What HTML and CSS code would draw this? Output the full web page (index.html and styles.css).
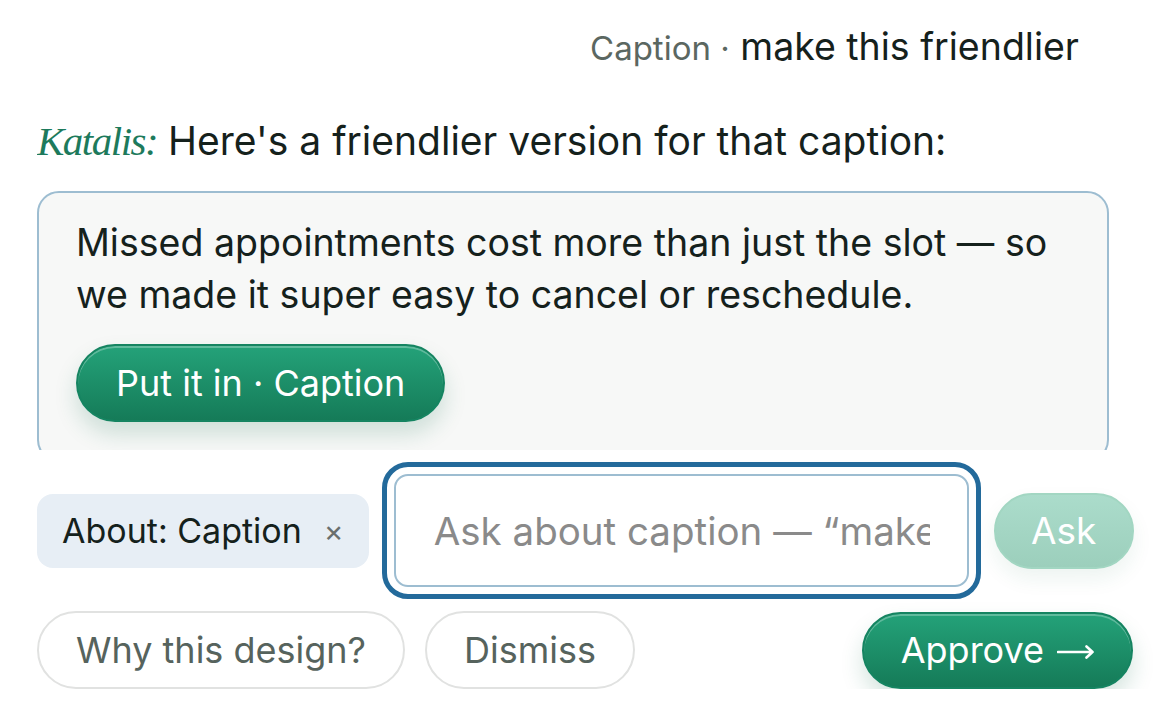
FILE: index.html
```html
<!DOCTYPE html>
<html lang="en">
<head>
<meta charset="utf-8">
<title>Katalis</title>
<link rel="stylesheet" href="styles.css">
</head>
<body>
<div class="app">
  <div class="thread">
    <div class="user-msg"><span class="user-scope">Caption ·</span> make this friendlier</div>
    <div class="reply"><span class="bot-name">Katalis:</span> Here's a friendlier version for that caption:</div>
    <div class="card">
      <p class="card-text">Missed appointments cost more than just the slot — so we made it super easy to cancel or reschedule.</p>
      <button class="btn btn-green btn-put">Put it in · Caption</button>
    </div>
  </div>
  <div class="ask-row">
    <div class="chip"><span>About: Caption</span><span class="chip-x">×</span></div>
    <input class="ask-input" type="text" placeholder="Ask about caption — “make it shorter”">
    <button class="btn btn-ask">Ask</button>
  </div>
  <div class="actions">
    <button class="btn btn-ghost btn-why">Why this design?</button>
    <button class="btn btn-ghost btn-dismiss">Dismiss</button>
    <button class="btn btn-green btn-approve"><span>Approve</span><svg class="arrow" width="37" height="16" viewBox="0 0 37 16" aria-hidden="true"><path d="M1 8H35.5M29.5 2.5L35.5 8L29.5 13.5" fill="none" stroke="#ffffff" stroke-width="2.6" stroke-linecap="round" stroke-linejoin="round"/></svg></button>
  </div>
</div>
</body>
</html>
```
FILE: styles.css
```css
* { box-sizing: border-box; }
html, body { margin: 0; padding: 0; background: #ffffff; }
body { font-family: Inter, "Noto Sans", sans-serif; color: #15211c; }

.app { padding: 0 37px; width: 1170px; }

.thread {
  height: 450px;
  overflow: hidden;
  padding-right: 24px;
  padding-top: 24px;
}

.user-msg {
  text-align: right;
  padding-right: 30px;
  font-size: 37.5px;
  line-height: 46px;
  color: #15211c;
}
.user-scope { color: #5b6761; font-size: 33px; }

.reply {
  margin-top: 47px;
  font-size: 39px;
  line-height: 46px;
  white-space: nowrap;
}
.bot-name {
  font-family: "Liberation Serif", serif;
  font-style: italic;
  color: #1d7a5c;
  font-size: 41px;
  letter-spacing: -1.5px;
}

.card {
  margin-top: 27px;
  border: 2px solid #9dbdd1;
  border-radius: 22px;
  background: #f7f8f7;
  padding: 24px 37px 38px;
}
.card-text {
  margin: 0;
  font-size: 37.5px;
  line-height: 52px;
}

.btn {
  font-family: Inter, "Noto Sans", sans-serif;
  font-size: 36px;
  border-radius: 40px;
  cursor: pointer;
  white-space: nowrap;
  flex-shrink: 0;
}
.btn-green {
  color: #ffffff;
  border: 2px solid #158461;
  background: linear-gradient(#24a279, #157b58);
  box-shadow: inset 0 2px 0 rgba(255,255,255,0.28), 0 12px 22px rgba(20,110,80,0.18);
}
.btn-put {
  margin-top: 23px;
  height: 78px;
  padding: 0 38px;
}

.ask-row {
  display: flex;
  align-items: center;
  gap: 25px;
  margin-top: 24px;
}
.chip {
  display: flex;
  align-items: center;
  flex-shrink: 0;
  white-space: nowrap;
  gap: 22px;
  height: 74px;
  padding: 0 25px 0 25px;
  background: #e7eef5;
  border-radius: 16px;
  font-size: 34px;
}
.chip-x { color: #6a6f6d; font-size: 30px; }

.ask-input {
  width: 575px;
  flex-shrink: 0;
  height: 113px;
  border: 2px solid #9dbdd1;
  border-radius: 14px;
  outline: 5px solid #236a9b;
  outline-offset: 7px;
  padding: 0 37px 0 38px;
  font-family: Inter, "Noto Sans", sans-serif;
  font-size: 38.5px;
  color: #222;
  background: #fff;
}
.ask-input::placeholder { color: #8a8a8a; }

.btn-ask {
  width: 140px;
  height: 76px;
  padding: 0;
  font-size: 37px;
  color: #ffffff;
  border: 2px solid #a2d6c2;
  background: linear-gradient(#abdccb, #9ccfbc);
  box-shadow: 0 10px 20px rgba(20,110,80,0.08);
}

.actions {
  display: flex;
  align-items: center;
  gap: 20px;
  margin-top: 24px;
}
.btn-ghost {
  height: 78px;
  background: #ffffff;
  border: 2px solid #e1e2e1;
  color: #56635d;
  padding: 0 37px;
}
.btn-approve {
  margin-left: auto;
  height: 77px;
  padding: 0 37px;
  display: flex;
  align-items: center;
  gap: 13px;
}
.arrow { display: block; margin-top: 3px; }
```
